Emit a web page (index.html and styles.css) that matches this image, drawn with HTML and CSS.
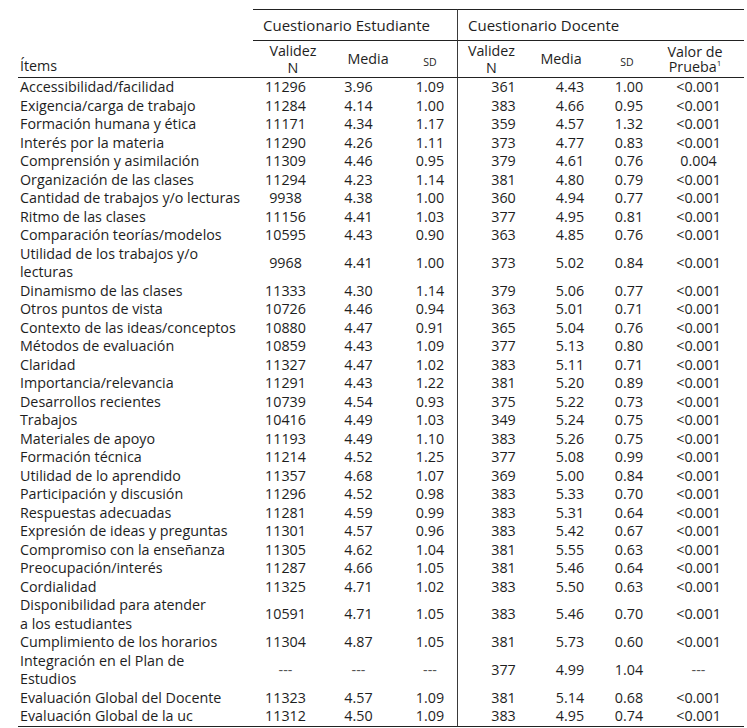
FILE: index.html
```html
<!DOCTYPE html>
<html lang="es">
<head>
<meta charset="utf-8">
<title>Cuestionario Estudiante / Docente</title>
<link rel="stylesheet" href="styles.css">
</head>
<body>
<table class="tbl">
  <colgroup>
    <col class="c-item"><col class="c-vne"><col class="c-mde"><col class="c-sde">
    <col class="c-vnd"><col class="c-mdd"><col class="c-sdd"><col class="c-vp">
  </colgroup>
  <thead>
    <tr class="h1">
      <th rowspan="2" class="items">Ítems</th>
      <th colspan="3" class="grp">Cuestionario Estudiante</th>
      <th colspan="4" class="grp doc">Cuestionario Docente</th>
    </tr>
    <tr class="h2">
      <th class="hvn"><span class="ln">Validez</span><span class="ln">N</span></th>
      <th class="hmde">Media</th>
      <th class="hsde"><span class="sc">SD</span></th>
      <th class="hvn doc"><span class="ln">Validez</span><span class="ln">N</span></th>
      <th class="hmdd">Media</th>
      <th class="hsdd"><span class="sc">SD</span></th>
      <th class="hvp"><span class="ln2">Valor de</span><span class="ln2">Prueba<sup>1</sup></span></th>
    </tr>
  </thead>
  <tbody>
    <tr><td>Accessibilidad/facilidad</td><td>11296</td><td>3.96</td><td>1.09</td><td>361</td><td>4.43</td><td>1.00</td><td>&lt;0.001</td></tr>
    <tr><td>Exigencia/carga de trabajo</td><td>11284</td><td>4.14</td><td>1.00</td><td>383</td><td>4.66</td><td>0.95</td><td>&lt;0.001</td></tr>
    <tr><td>Formación humana y ética</td><td>11171</td><td>4.34</td><td>1.17</td><td>359</td><td>4.57</td><td>1.32</td><td>&lt;0.001</td></tr>
    <tr><td>Interés por la materia</td><td>11290</td><td>4.26</td><td>1.11</td><td>373</td><td>4.77</td><td>0.83</td><td>&lt;0.001</td></tr>
    <tr><td>Comprensión y asimilación</td><td>11309</td><td>4.46</td><td>0.95</td><td>379</td><td>4.61</td><td>0.76</td><td>0.004</td></tr>
    <tr><td>Organización de las clases</td><td>11294</td><td>4.23</td><td>1.14</td><td>381</td><td>4.80</td><td>0.79</td><td>&lt;0.001</td></tr>
    <tr><td>Cantidad de trabajos y/o lecturas</td><td>9938</td><td>4.38</td><td>1.00</td><td>360</td><td>4.94</td><td>0.77</td><td>&lt;0.001</td></tr>
    <tr><td>Ritmo de las clases</td><td>11156</td><td>4.41</td><td>1.03</td><td>377</td><td>4.95</td><td>0.81</td><td>&lt;0.001</td></tr>
    <tr><td>Comparación teorías/modelos</td><td>10595</td><td>4.43</td><td>0.90</td><td>363</td><td>4.85</td><td>0.76</td><td>&lt;0.001</td></tr>
    <tr><td>Utilidad de los trabajos y/o<br>lecturas</td><td>9968</td><td>4.41</td><td>1.00</td><td>373</td><td>5.02</td><td>0.84</td><td>&lt;0.001</td></tr>
    <tr><td>Dinamismo de las clases</td><td>11333</td><td>4.30</td><td>1.14</td><td>379</td><td>5.06</td><td>0.77</td><td>&lt;0.001</td></tr>
    <tr><td>Otros puntos de vista</td><td>10726</td><td>4.46</td><td>0.94</td><td>363</td><td>5.01</td><td>0.71</td><td>&lt;0.001</td></tr>
    <tr><td>Contexto de las ideas/conceptos</td><td>10880</td><td>4.47</td><td>0.91</td><td>365</td><td>5.04</td><td>0.76</td><td>&lt;0.001</td></tr>
    <tr><td>Métodos de evaluación</td><td>10859</td><td>4.43</td><td>1.09</td><td>377</td><td>5.13</td><td>0.80</td><td>&lt;0.001</td></tr>
    <tr><td>Claridad</td><td>11327</td><td>4.47</td><td>1.02</td><td>383</td><td>5.11</td><td>0.71</td><td>&lt;0.001</td></tr>
    <tr><td>Importancia/relevancia</td><td>11291</td><td>4.43</td><td>1.22</td><td>381</td><td>5.20</td><td>0.89</td><td>&lt;0.001</td></tr>
    <tr><td>Desarrollos recientes</td><td>10739</td><td>4.54</td><td>0.93</td><td>375</td><td>5.22</td><td>0.73</td><td>&lt;0.001</td></tr>
    <tr><td>Trabajos</td><td>10416</td><td>4.49</td><td>1.03</td><td>349</td><td>5.24</td><td>0.75</td><td>&lt;0.001</td></tr>
    <tr><td>Materiales de apoyo</td><td>11193</td><td>4.49</td><td>1.10</td><td>383</td><td>5.26</td><td>0.75</td><td>&lt;0.001</td></tr>
    <tr><td>Formación técnica</td><td>11214</td><td>4.52</td><td>1.25</td><td>377</td><td>5.08</td><td>0.99</td><td>&lt;0.001</td></tr>
    <tr><td>Utilidad de lo aprendido</td><td>11357</td><td>4.68</td><td>1.07</td><td>369</td><td>5.00</td><td>0.84</td><td>&lt;0.001</td></tr>
    <tr><td>Participación y discusión</td><td>11296</td><td>4.52</td><td>0.98</td><td>383</td><td>5.33</td><td>0.70</td><td>&lt;0.001</td></tr>
    <tr><td>Respuestas adecuadas</td><td>11281</td><td>4.59</td><td>0.99</td><td>383</td><td>5.31</td><td>0.64</td><td>&lt;0.001</td></tr>
    <tr><td>Expresión de ideas y preguntas</td><td>11301</td><td>4.57</td><td>0.96</td><td>383</td><td>5.42</td><td>0.67</td><td>&lt;0.001</td></tr>
    <tr><td>Compromiso con la enseñanza</td><td>11305</td><td>4.62</td><td>1.04</td><td>381</td><td>5.55</td><td>0.63</td><td>&lt;0.001</td></tr>
    <tr><td>Preocupación/interés</td><td>11287</td><td>4.66</td><td>1.05</td><td>381</td><td>5.46</td><td>0.64</td><td>&lt;0.001</td></tr>
    <tr><td>Cordialidad</td><td>11325</td><td>4.71</td><td>1.02</td><td>383</td><td>5.50</td><td>0.63</td><td>&lt;0.001</td></tr>
    <tr><td>Disponibilidad para atender<br>a los estudiantes</td><td>10591</td><td>4.71</td><td>1.05</td><td>383</td><td>5.46</td><td>0.70</td><td>&lt;0.001</td></tr>
    <tr><td>Cumplimiento de los horarios</td><td>11304</td><td>4.87</td><td>1.05</td><td>381</td><td>5.73</td><td>0.60</td><td>&lt;0.001</td></tr>
    <tr><td>Integración en el Plan de<br>Estudios</td><td class="na">---</td><td class="na">---</td><td class="na">---</td><td>377</td><td>4.99</td><td>1.04</td><td class="na">---</td></tr>
    <tr><td>Evaluación Global del Docente</td><td>11323</td><td>4.57</td><td>1.09</td><td>381</td><td>5.14</td><td>0.68</td><td>&lt;0.001</td></tr>
    <tr class="last"><td>Evaluación Global de la uc</td><td>11312</td><td>4.50</td><td>1.09</td><td>383</td><td>4.95</td><td>0.74</td><td>&lt;0.001</td></tr>
  </tbody>
</table>
</body>
</html>
```

FILE: styles.css
```css
html, body {
  margin: 0;
  padding: 0;
  background: #ffffff;
}

body {
  font-family: "Open Sans", "Noto Sans", sans-serif;
  font-size: 14.3px;
  color: #1e1e1e;
}

.tbl {
  border-collapse: separate;
  border-spacing: 0;
  table-layout: fixed;
  width: 726px;
  margin: 9px 0 0 18px;
}

.c-item { width: 235px; }
.c-vne  { width: 80px; }
.c-mde  { width: 70px; }
.c-sde  { width: 54px; }
.c-vnd  { width: 68px; }
.c-mdd  { width: 67px; }
.c-sdd  { width: 61px; }
.c-vp   { width: 91px; }

th {
  font-weight: normal;
  padding: 0;
  text-align: center;
  vertical-align: middle;
}

.h1 th {
  height: 30px;
}

.grp {
  text-align: left;
  padding-left: 10px;
  border-top: 1px solid #222;
  border-bottom: 1px solid #222;
  font-size: 15px;
}

.doc {
  border-left: 1px solid #3a3a3a;
}

.items {
  text-align: left;
  vertical-align: bottom;
  padding: 0 0 2px 2px;
  border-bottom: 1px solid #222;
  line-height: 18px;
}

.h2 th {
  height: 36px;
  line-height: 16px;
  border-bottom: 1px solid #222;
}

.ln {
  display: block;
  line-height: 17px;
}

.ln2 {
  display: block;
  line-height: 15.5px;
}

.hmdd { padding-left: 5px; }
.hsdd { padding-left: 9px; }
.hvp  { padding-right: 7px; }

.sc {
  font-size: 10.5px;
  position: relative;
  top: 2px;
}

sup {
  font-size: 8px;
  line-height: 0;
  vertical-align: 6px;
}

td {
  padding: 0;
  line-height: 18.5px;
  text-align: center;
  vertical-align: middle;
  white-space: nowrap;
}

td:nth-child(1) { text-align: left; padding-left: 2px; }
td:nth-child(2) { padding-right: 15px; }
td:nth-child(3) { padding-right: 19px; }
td:nth-child(5) { padding-left: 24px; border-left: 1px solid #3a3a3a; }
td:nth-child(6) { padding-left: 23px; }
td:nth-child(7) { padding-left: 13px; }

td.na {
  color: #555;
}

.last td {
  border-bottom: 1px solid #222;
}
```
